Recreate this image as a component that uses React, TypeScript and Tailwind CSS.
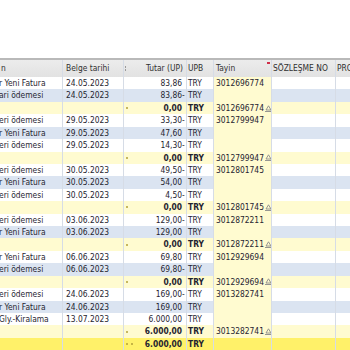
import React from 'react';

type Row =
  | { kind: 'item'; text: string; date: string; amount: string; neg?: boolean; tayin?: string; alt?: boolean }
  | { kind: 'sub'; amount: string; tayin: string }
  | { kind: 'total'; amount: string };

const rows: Row[] = [
  { kind: 'item', text: 'r Yeni Fatura', date: '24.05.2023', amount: '83,86', tayin: '3012696774' },
  { kind: 'item', text: 'ari ödemesi', date: '24.05.2023', amount: '83,86', neg: true, alt: true },
  { kind: 'sub', amount: '0,00', tayin: '3012696774' },
  { kind: 'item', text: 'eri ödemesi', date: '29.05.2023', amount: '33,30', neg: true, tayin: '3012799947' },
  { kind: 'item', text: 'r Yeni Fatura', date: '29.05.2023', amount: '47,60', alt: true },
  { kind: 'item', text: 'eri ödemesi', date: '29.05.2023', amount: '14,30', neg: true },
  { kind: 'sub', amount: '0,00', tayin: '3012799947' },
  { kind: 'item', text: 'eri ödemesi', date: '30.05.2023', amount: '49,50', neg: true, tayin: '3012801745' },
  { kind: 'item', text: 'r Yeni Fatura', date: '30.05.2023', amount: '54,00', alt: true },
  { kind: 'item', text: 'eri ödemesi', date: '30.05.2023', amount: '4,50', neg: true },
  { kind: 'sub', amount: '0,00', tayin: '3012801745' },
  { kind: 'item', text: 'eri ödemesi', date: '03.06.2023', amount: '129,00', neg: true, tayin: '3012872211' },
  { kind: 'item', text: 'r Yeni Fatura', date: '03.06.2023', amount: '129,00', alt: true },
  { kind: 'sub', amount: '0,00', tayin: '3012872211' },
  { kind: 'item', text: 'r Yeni Fatura', date: '06.06.2023', amount: '69,80', tayin: '3012929694' },
  { kind: 'item', text: 'eri ödemesi', date: '06.06.2023', amount: '69,80', neg: true, alt: true },
  { kind: 'sub', amount: '0,00', tayin: '3012929694' },
  { kind: 'item', text: 'eri ödemesi', date: '24.06.2023', amount: '169,00', neg: true, tayin: '3013282741' },
  { kind: 'item', text: 'r Yeni Fatura', date: '24.06.2023', amount: '169,00', alt: true },
  { kind: 'item', text: 'Gly.-Kiralama', date: '13.07.2023', amount: '6.000,00' },
  { kind: 'sub', amount: '6.000,00', tayin: '3013282741' },
  { kind: 'total', amount: '6.000,00' },
];

const grid = 'grid grid-cols-[62px_61px_63px_27px_58px_64px_60px] w-[395px]';
const cell = 'border-l border-[#d6dce6] overflow-hidden whitespace-nowrap flex items-center';

function SubIcon() {
  return (
    <svg width="7" height="7" viewBox="0 0 7 7" className="ml-[1px] shrink-0">
      <path d="M3.5 0.8 L6 5 H1 Z" fill="none" stroke="#8a8a8a" strokeWidth="0.9" />
      <path d="M0 6.5 H7" stroke="#8a8a8a" strokeWidth="0.9" />
    </svg>
  );
}

function Dot() {
  return <span className="w-[2px] h-[2px] rounded-full bg-[#b3a03a] inline-block" />;
}

function Amount({ value, neg, bold }: { value: string; neg?: boolean; bold?: boolean }) {
  return (
    <span className={bold ? 'font-bold' : ''}>
      {value}
      <span className="inline-block w-[4px]">{neg ? '-' : ''}</span>
    </span>
  );
}

function DataRow({ row }: { row: Row }) {
  if (row.kind === 'item') {
    const bg = row.alt ? 'bg-[#dbe4f1]' : 'bg-white';
    return (
      <div className={`${grid} h-[12.43px] ${bg}`}>
        <div className="overflow-hidden whitespace-nowrap flex items-center">
          <span className="-ml-[1px]">{row.text}</span>
        </div>
        <div className={`${cell} pl-[3px]`}>{row.date}</div>
        <div className={`${cell} justify-end`}>
          <Amount value={row.amount} neg={row.neg} />
        </div>
        <div className={`${cell} pl-[1px]`}>TRY</div>
        <div className={`${cell} pl-[2px] bg-[#fffbd0]`}>{row.tayin}</div>
        <div className={cell} />
        <div className={cell} />
      </div>
    );
  }
  const total = row.kind === 'total';
  return (
    <div className={`${grid} h-[12.43px] ${total ? 'bg-[#fff169]' : 'bg-[#fffbd0]'}`}>
      <div />
      <div className={cell} />
      <div className={`${cell} justify-between`}>
        <span className="flex gap-[3px] pl-[2px]">
          <Dot />
          {total && <Dot />}
        </span>
        <Amount value={row.amount} bold />
      </div>
      <div className={`${cell} pl-[1px] font-bold`}>TRY</div>
      <div className={`${cell} pl-[2px]`}>
        {row.kind === 'sub' && (
          <>
            <span>{row.tayin}</span>
            <SubIcon />
          </>
        )}
      </div>
      <div className={cell} />
      <div className={cell} />
    </div>
  );
}

export default function App() {
  return (
    <div className="w-[350px] h-[350px] overflow-hidden bg-white text-[#1f2430] text-[8.4px] leading-none font-['DejaVu_Sans_Condensed','DejaVu_Sans',sans-serif] [font-stretch:condensed]">
      <div className="h-[58px]" />
      <div className="border-t-2 border-[#b9b9b9]">
        <div className={`${grid} h-[17px] bg-gradient-to-b from-[#ececec] to-[#e2e2e2] text-[#303030]`}>
          <div className="overflow-hidden whitespace-nowrap flex items-center">
            <span className="pl-[1px]">n</span>
          </div>
          <div className={`${cell} border-[#cfcfcf] pl-[3px]`}>Belge tarihi</div>
          <div className={`${cell} border-[#cfcfcf] justify-between`}>
            <span className="flex flex-col gap-[1px] pl-[1px]">
              <span className="w-[1px] h-[2px] bg-[#9a9a9a]" />
              <span className="w-[1px] h-[2px] bg-[#9a9a9a]" />
            </span>
            <span className="pr-[3px]">Tutar (UP)</span>
          </div>
          <div className={`${cell} border-[#cfcfcf] pl-[1px]`}>UPB</div>
          <div className={`${cell} border-[#cfcfcf] pl-[2px] relative`}>
            Tayin
            <span className="absolute right-[1px] top-[2px] w-[3px] h-[2px] bg-[#d0304a]" />
          </div>
          <div className={`${cell} border-[#cfcfcf] pl-[1px]`}>SÖZLEŞME NO</div>
          <div className={`${cell} border-[#cfcfcf] pl-[1px]`}>PROJE</div>
        </div>
        {rows.map((r, i) => (
          <DataRow key={i} row={r} />
        ))}
      </div>
    </div>
  );
}
